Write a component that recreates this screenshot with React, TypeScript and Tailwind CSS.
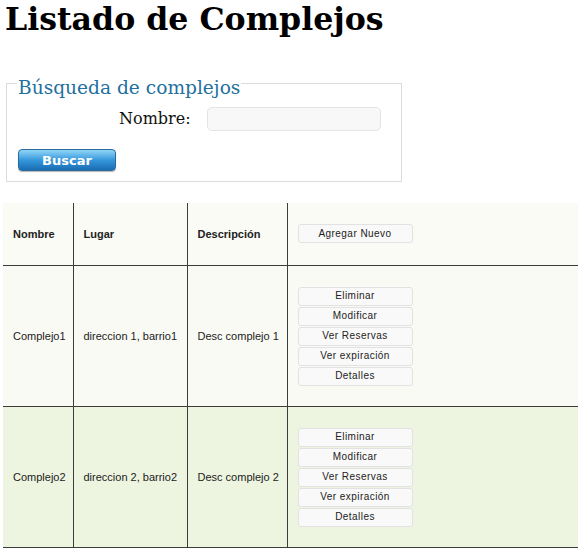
const rows = [
  { nombre: "Complejo1", lugar: "direccion 1, barrio1", desc: "Desc complejo 1", bg: "bg-[#fafaf5]" },
  { nombre: "Complejo2", lugar: "direccion 2, barrio2", desc: "Desc complejo 2", bg: "bg-[#edf5e0]" },
];

const acciones = ["Eliminar", "Modificar", "Ver Reservas", "Ver expiración", "Detalles"];

function SmallButton({ label }: { label: string }) {
  return (
    <button className="w-[115px] h-[19px] rounded-[3px] border border-[#e2e2e2] bg-[#f9f9f9] text-[10px] tracking-[0.45px] text-[#222] leading-none font-['Liberation_Sans',sans-serif]">
      {label}
    </button>
  );
}

export default function App() {
  return (
    <div className="w-[581px] h-[548px] overflow-hidden bg-white font-['Liberation_Sans',sans-serif] text-[#222]">
      <h1 className="pl-[5px] pt-[1px] text-[31.6px] leading-[36px] font-bold font-['DejaVu_Serif',serif] text-black">
        Listado de Complejos
      </h1>

      <fieldset className="ml-[6px] mt-[31px] w-[396px] border border-[#dcdcdc] px-[10px] pb-[9px]">
        <legend className="px-[1px] pt-[10px] text-[18.6px] leading-[20px] text-[#23709e] font-['DejaVu_Serif',serif]">
          Búsqueda de complejos
        </legend>
        <div className="flex items-center mt-[9px]">
          <span className="ml-[102px] w-[88px] text-[16px] font-['DejaVu_Serif',serif] text-[#111]">Nombre:</span>
          <input className="w-[174px] h-[24px] rounded-[5px] border border-[#e4e4e4] bg-[#f8f8f8]" />
        </div>
        <button className="ml-[1px] mt-[18px] w-[98px] h-[22px] rounded-[4px] border border-[#2a6b9c] bg-gradient-to-b from-[#8fd6f6] via-[#3598dc] to-[#1a6db3] text-white text-[13px] font-bold font-['DejaVu_Sans',sans-serif] leading-none shadow-[0_1px_1px_rgba(0,0,0,0.3)]">
          Buscar
        </button>
      </fieldset>

      <table className="ml-[3px] mt-[21px] w-[575px] border-collapse text-[11px]">
        <tbody>
          <tr className="h-[63px] bg-[#fbfbf5] border-b border-[#3c3c3c]">
            <th className="w-[70px] text-left font-bold pl-[10px]">Nombre</th>
            <th className="w-[114px] text-left font-bold pl-[10px] border-l border-[#3c3c3c]">Lugar</th>
            <th className="w-[100px] text-left font-bold pl-[10px] border-l border-[#3c3c3c]">Descripción</th>
            <td className="pl-[10px] border-l border-[#3c3c3c]">
              <SmallButton label="Agregar Nuevo" />
            </td>
          </tr>
          {rows.map((r, i) => (
            <tr key={i} className={`h-[141px] ${r.bg} border-b border-[#3c3c3c]`}>
              <td className="pl-[10px]">{r.nombre}</td>
              <td className="pl-[10px] border-l border-[#3c3c3c]">{r.lugar}</td>
              <td className="pl-[10px] border-l border-[#3c3c3c]">{r.desc}</td>
              <td className="pl-[10px] border-l border-[#3c3c3c]">
                <div className="flex flex-col gap-[1px]">
                  {acciones.map((a) => (
                    <SmallButton key={a} label={a} />
                  ))}
                </div>
              </td>
            </tr>
          ))}
        </tbody>
      </table>
    </div>
  );
}
